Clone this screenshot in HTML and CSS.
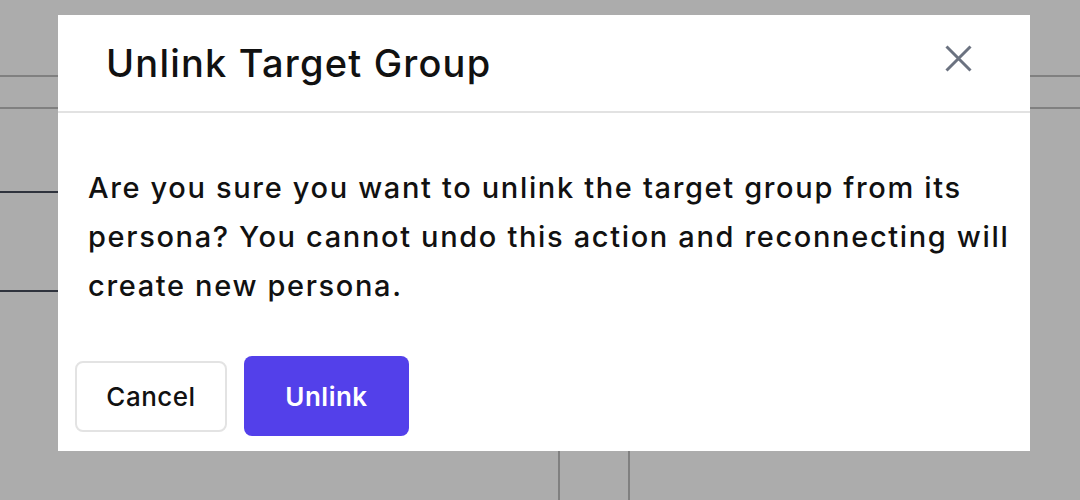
FILE: index.html
```html
<!DOCTYPE html>
<html lang="en">
<head>
  <meta charset="UTF-8">
  <meta name="viewport" content="width=device-width, initial-scale=1.0">
  <title>Unlink Target Group</title>
  <link rel="stylesheet" href="styles.css">
</head>
<body>
  <!-- dimmed page behind the dialog -->
  <div class="page">
    <div class="toolbar"></div>
    <div class="side-rows">
      <div class="side-row"></div>
      <div class="side-row"></div>
    </div>
    <div class="table-cols">
      <div class="col col-a"></div>
      <div class="col col-b"></div>
    </div>
  </div>

  <div class="modal" role="dialog" aria-labelledby="modal-title">
    <header class="modal-header">
      <h2 id="modal-title" class="modal-title">Unlink Target Group</h2>
      <button class="close-btn" aria-label="Close">
        <svg viewBox="0 0 27 27" width="27" height="27">
          <path d="M1.5 1.5 L25.5 25.5 M25.5 1.5 L1.5 25.5" stroke="#6b7280" stroke-width="3" fill="none"/>
        </svg>
      </button>
    </header>

    <div class="modal-body">
      <p>Are you sure you want to unlink the target group from its persona? You cannot undo this action and reconnecting will create new persona.</p>
    </div>

    <footer class="modal-footer">
      <button class="btn btn-cancel">Cancel</button>
      <button class="btn btn-primary">Unlink</button>
    </footer>
  </div>
</body>
</html>
```

FILE: styles.css
```css
* {
  box-sizing: border-box;
}

body {
  margin: 0;
  height: 500px;
  overflow: hidden;
  background-color: #acacac;
  font-family: "Inter", "Noto Sans", sans-serif;
}

/* background page (under the overlay) */
.page {
  display: flex;
  flex-direction: column;
  height: 500px;
  overflow: hidden;
}

.toolbar {
  margin-top: 75px;
  height: 34px;
  border-top: 2px solid #808080;
  border-bottom: 2px solid #808080;
}

.side-rows {
  width: 200px;
  margin-top: 82px;
}

.side-row {
  height: 99px;
  border-top: 2px solid #2f333d;
}

.table-cols {
  display: flex;
  flex: 1;
  margin-top: 58px;
  padding-left: 558px;
}

.col {
  border-left: 2px solid #808080;
}

.col-a {
  width: 70px;
}

.col-b {
  width: 2px;
}

/* dialog */
.modal {
  position: absolute;
  top: 15px;
  left: 58px;
  width: 972px;
  height: 436px;
  background-color: #fff;
  display: flex;
  flex-direction: column;
}

.modal-header {
  display: flex;
  align-items: center;
  justify-content: space-between;
  height: 98px;
  padding: 0 58px 0 48px;
  border-bottom: 2px solid #e2e2e2;
}

.modal-title {
  margin: 0;
  font-size: 38px;
  font-weight: 500;
  letter-spacing: 1.2px;
  color: #111;
}

.close-btn {
  border: none;
  background: none;
  padding: 0;
  width: 27px;
  height: 27px;
  margin-bottom: 10px;
  cursor: pointer;
}

.close-btn svg {
  display: block;
}

.modal-body {
  padding: 50px 20px 0 30px;
}

.modal-body p {
  margin: 0;
  font-size: 29px;
  line-height: 49px;
  font-weight: 500;
  letter-spacing: 1.65px;
  color: #111;
}

.modal-footer {
  display: flex;
  align-items: center;
  gap: 17px;
  margin-top: auto;
  padding: 0 17px 15px;
}

.btn {
  font-family: inherit;
  font-size: 26px;
  letter-spacing: 0.5px;
  border-radius: 8px;
  cursor: pointer;
}

.btn-cancel {
  width: 152px;
  height: 71px;
  background-color: #fff;
  border: 2px solid #e3e3e3;
  color: #111;
  font-weight: 500;
}

.btn-primary {
  width: 165px;
  height: 80px;
  background-color: #5340ea;
  border: none;
  color: #fff;
  font-weight: 600;
}
```
